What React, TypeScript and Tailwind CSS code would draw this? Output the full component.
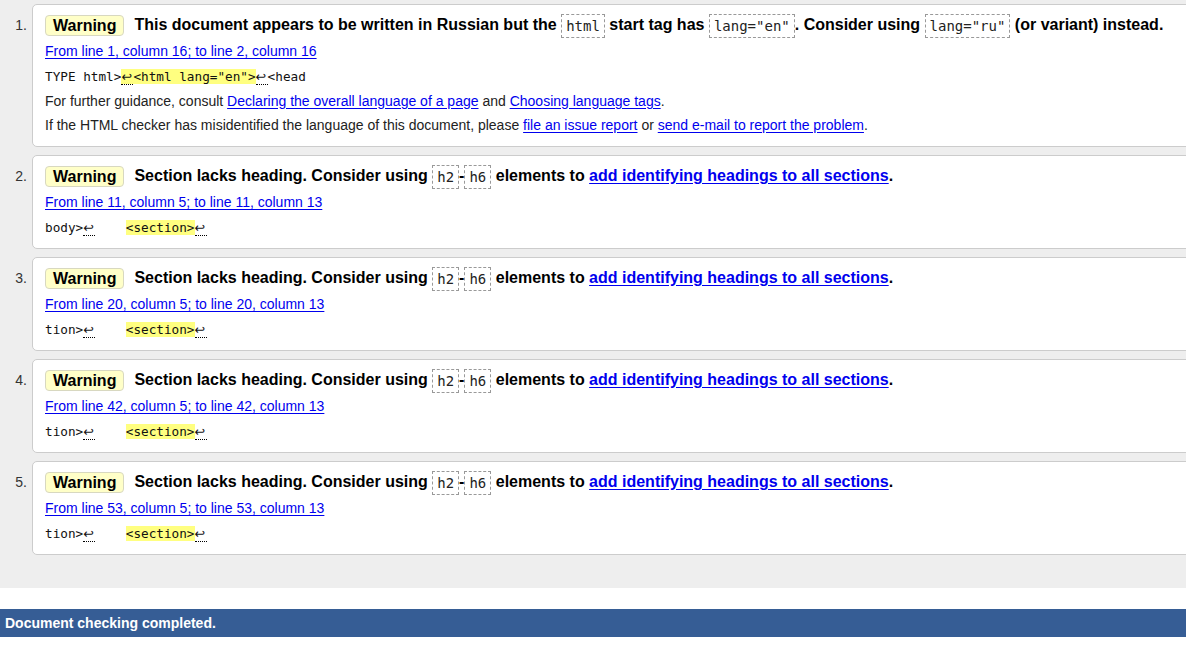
import React from 'react';

const mono = "font-['DejaVu_Sans_Mono',monospace]";

const Lf = () => (
  <span className="inline-block w-[12px] leading-[14px] border-b border-dotted border-black font-['DejaVu_Sans',sans-serif]">
    ↩
  </span>
);

const Hl: React.FC<{ children: React.ReactNode }> = ({ children }) => (
  <span className="bg-[#ffff80]">{children}</span>
);

const Code: React.FC<{ children: React.ReactNode }> = ({ children }) => (
  <code
    className={`inline-block align-middle border border-dashed border-[#999] bg-white px-[4px] py-[3px] leading-[16px] text-[14px] font-normal text-[#222] ${mono}`}
  >
    {children}
  </code>
);

const A: React.FC<{ children: React.ReactNode }> = ({ children }) => (
  <a href="#" className="text-[#0000ee] underline underline-offset-[2px]">
    {children}
  </a>
);

const Title: React.FC<{ children: React.ReactNode }> = ({ children }) => (
  <div className="h-[27px] flex items-center whitespace-nowrap text-[16px] font-bold text-black">
    <span className="inline-block bg-[#ffffc8] border border-[#d8d8c0] rounded-[4px] px-[7px] leading-[19px] mr-[10px]">
      Warning
    </span>
    <span>{children}</span>
  </div>
);

const Location: React.FC<{ text: string }> = ({ text }) => (
  <div className="h-[25px] flex items-center text-[14px]">
    <A>{text}</A>
  </div>
);

const Extract: React.FC<{ children: React.ReactNode }> = ({ children }) => (
  <div className={`h-[25px] flex items-center whitespace-pre text-[12.7px] text-[#111] ${mono}`}>
    <span>{children}</span>
  </div>
);

const Item: React.FC<{ n: number; children: React.ReactNode }> = ({ n, children }) => (
  <div className="flex">
    <div className="w-[32px] shrink-0 pt-[8px] pr-[5px]">
      <div className="h-[27px] flex items-center justify-end text-[14px] text-[#333]">{n}.</div>
    </div>
    <div className="flex-1 -mr-[12px] bg-white border border-[#ccc] rounded-[5px] pt-[7px] pb-[8px] pl-[12px]">
      {children}
    </div>
  </div>
);

const sectionTitle = (
  <>
    Section lacks heading. Consider using <Code>h2</Code>-<Code>h6</Code> elements to{' '}
    <A>add identifying headings to all sections</A>.
  </>
);

const sections = [
  { n: 2, loc: 'From line 11, column 5; to line 11, column 13', pre: 'body>' },
  { n: 3, loc: 'From line 20, column 5; to line 20, column 13', pre: 'tion>' },
  { n: 4, loc: 'From line 42, column 5; to line 42, column 13', pre: 'tion>' },
  { n: 5, loc: 'From line 53, column 5; to line 53, column 13', pre: 'tion>' },
];

export default function App() {
  return (
    <div className="w-full overflow-hidden bg-white font-['Liberation_Sans',Arial,sans-serif] text-[#222]">
      <div className="bg-[#eeeeee] pt-[4px] pb-[33px] flex flex-col gap-[8px]">
        <Item n={1}>
          <Title>
            This document appears to be written in Russian but the <Code>html</Code> start tag has{' '}
            <Code>lang="en"</Code>. Consider using <Code>lang="ru"</Code> (or variant) instead.
          </Title>
          <Location text="From line 1, column 16; to line 2, column 16" />
          <Extract>
            TYPE html&gt;
            <Hl>
              <Lf />
              &lt;html lang="en"&gt;
            </Hl>
            <Lf />
            &lt;head
          </Extract>
          <div className="h-[24px] flex items-center text-[14px]">
            <span>
              For further guidance, consult <A>Declaring the overall language of a page</A> and{' '}
              <A>Choosing language tags</A>.
            </span>
          </div>
          <div className="h-[25px] flex items-center text-[14px]">
            <span>
              If the HTML checker has misidentified the language of this document, please{' '}
              <A>file an issue report</A> or <A>send e-mail to report the problem</A>.
            </span>
          </div>
        </Item>
        {sections.map((s) => (
          <Item key={s.n} n={s.n}>
            <Title>{sectionTitle}</Title>
            <Location text={s.loc} />
            <Extract>
              {s.pre}
              <Lf />
              {'    '}
              <Hl>&lt;section&gt;</Hl>
              <Lf />
            </Extract>
          </Item>
        ))}
      </div>
      <div className="mt-[21px] h-[28px] bg-[#365d95] text-white font-bold text-[14px] pl-[5px] flex items-center">
        Document checking completed.
      </div>
      <div className="h-[8px]" />
    </div>
  );
}
